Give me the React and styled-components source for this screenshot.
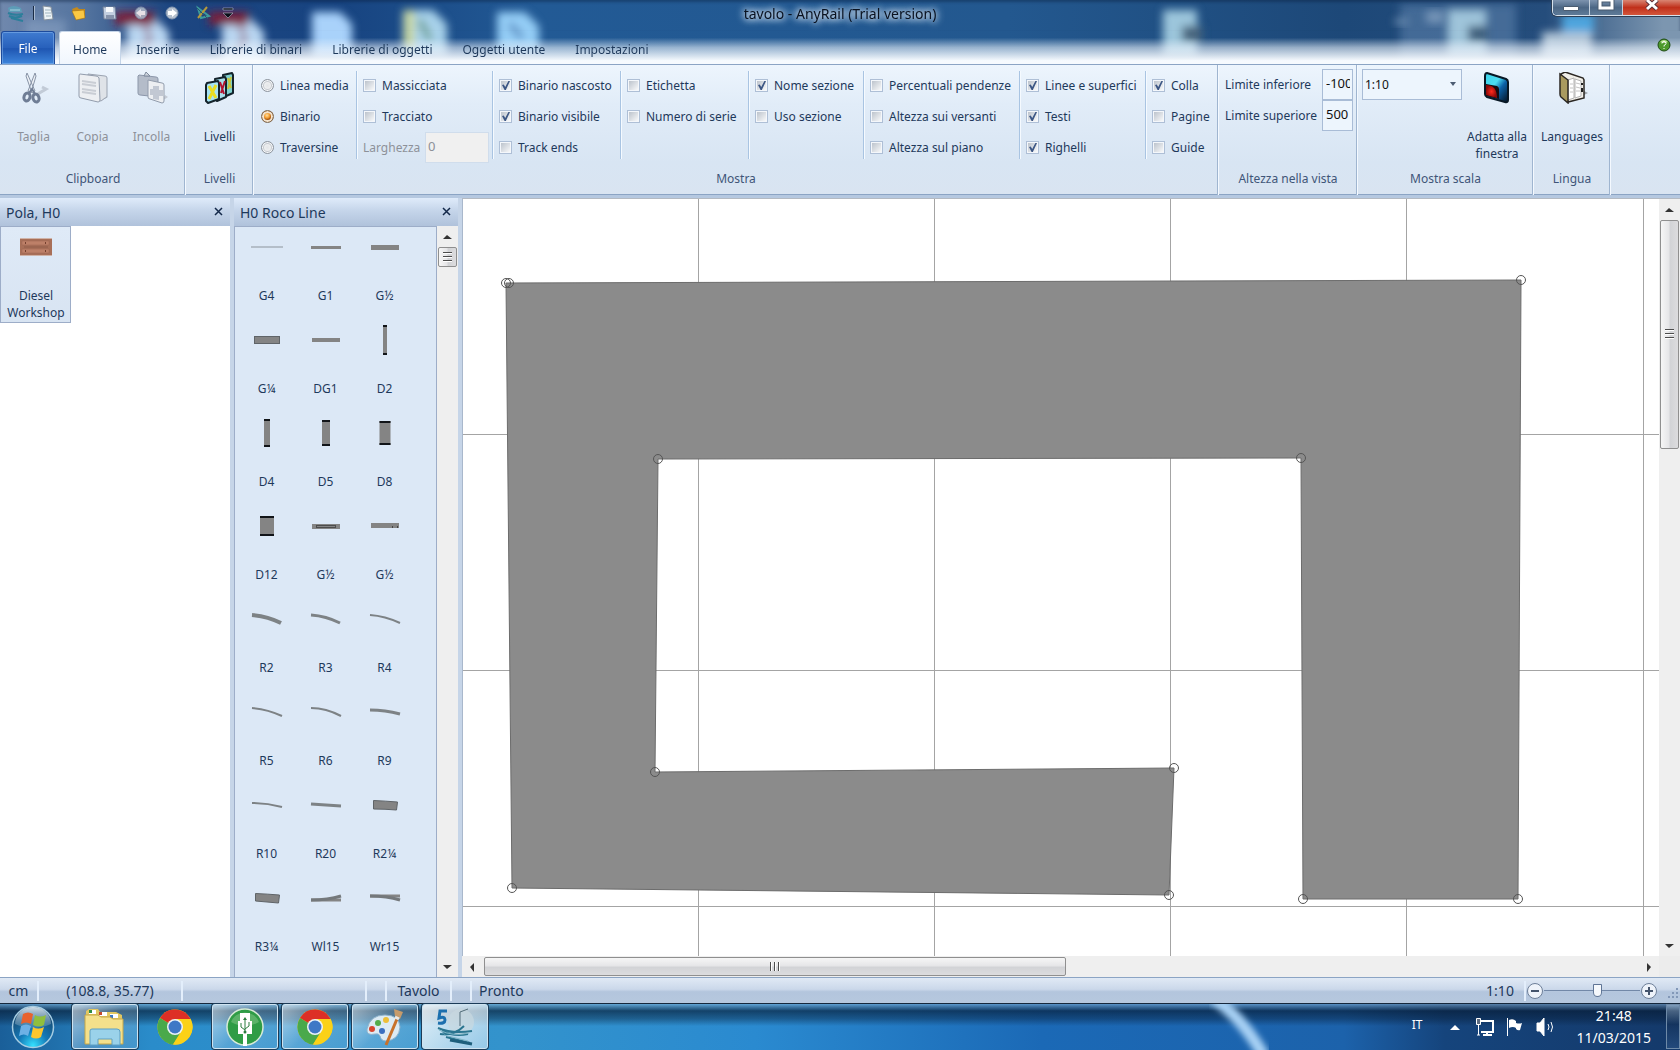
// src/App.jsx
import React from "react";
import styled, { createGlobalStyle, css } from "styled-components";

const GlobalStyle = createGlobalStyle`
  * {
    box-sizing: border-box;
  }

  body {
    margin: 0;
    overflow: hidden;
    font-family: "Noto Sans", "Open Sans", sans-serif;
    font-size: 12px;
    line-height: 17px;
    color: #1e395b;
  }

  button,
  input,
  select {
    margin: 0;
    padding: 0;
    font: inherit;
    color: inherit;
  }

  button {
    border: 0;
    background: none;
  }
`;

/* ---------- data ---------- */

const tabs = [
  "Home",
  "Inserire",
  "Librerie di binari",
  "Librerie di oggetti",
  "Oggetti utente",
  "Impostazioni",
];

const trackModes = ["Linea media", "Binario", "Traversine"];

const showColumns = [
  {
    width: 126,
    options: [
      ["Binario nascosto", true],
      ["Binario visibile", true],
      ["Track ends", false],
    ],
  },
  {
    width: 126,
    options: [
      ["Etichetta", false],
      ["Numero di serie", false],
    ],
  },
  {
    width: 113,
    options: [
      ["Nome sezione", true],
      ["Uso sezione", false],
    ],
  },
  {
    width: 154,
    options: [
      ["Percentuali pendenze", false],
      ["Altezza sui versanti", false],
      ["Altezza sul piano", false],
    ],
  },
  {
    width: 124,
    options: [
      ["Linee e superfici", true],
      ["Testi", true],
      ["Righelli", true],
    ],
  },
  {
    width: 70,
    options: [
      ["Colla", true],
      ["Pagine", false],
      ["Guide", false],
    ],
  },
];

const rail = "#848484";
const edge = "#5f6468";

// every drawing is centred in a 40x40 cell
const tracks = [
  { name: "G4", art: <path d="M4 20H36" stroke="#b4bec9" strokeWidth="2" /> },
  { name: "G1", art: <path d="M5 20.5H35" stroke={rail} strokeWidth="3" /> },
  { name: "G½", art: <path d="M6 20.5H34" stroke={rail} strokeWidth="5" /> },
  {
    name: "G¼",
    art: <rect x="7.5" y="16.5" width="25" height="7" fill={rail} stroke={edge} />,
  },
  { name: "DG1", art: <path d="M6 20H34" stroke={rail} strokeWidth="4" /> },
  { name: "D2", art: <Straight w={4} h={30} /> },
  { name: "D4", art: <Straight w={6} h={28} /> },
  { name: "D5", art: <Straight w={8} h={26} /> },
  { name: "D8", art: <Straight w={11} h={24} /> },
  { name: "D12", art: <Straight w={14} h={20} /> },
  {
    name: "G½",
    art: (
      <g>
        <rect x="6" y="18" width="28" height="5" fill={rail} />
        <rect x="10.5" y="19.5" width="19" height="2" fill="none" stroke="#4c4c4c" />
      </g>
    ),
  },
  {
    name: "G½",
    art: (
      <g>
        <rect x="6" y="17" width="28" height="5" fill={rail} />
        <path d="M27.5 20v2M32.5 20v2" stroke="#444" />
      </g>
    ),
  },
  { name: "R2", art: <Curve w={4} d="M5 16Q20 17 34 24" /> },
  { name: "R3", art: <Curve w={3} d="M5 16Q20 17 34 24" /> },
  { name: "R4", art: <Curve w={2} d="M5 16Q20 17 35 24" /> },
  { name: "R5", art: <Curve w={2} d="M5 16Q20 17 35 24" /> },
  { name: "R6", art: <Curve w={2} d="M5 16Q20 16 35 24" /> },
  { name: "R9", art: <Curve w={3} d="M5 18Q20 18 35 22" /> },
  { name: "R10", art: <Curve w={2} d="M5 18Q20 18 35 22" /> },
  { name: "R20", art: <Curve w={3} d="M5 19L35 21" /> },
  {
    name: "R2¼",
    art: <path d="M8.5 15.500Q20 16 32.500 17L31.500 25Q20 24 8.500 24Z" fill={rail} stroke={edge} />,
  },
  {
    name: "R3¼",
    art: <path d="M8.500 15.500Q20 16 32.500 17L31.500 25Q20 24 8.500 23Z" fill={rail} stroke={edge} />,
  },
  {
    name: "Wl15",
    art: (
      <g fill="none" stroke={rail} strokeWidth="3">
        <path d="M5 22H35" />
        <path d="M5 22Q22 22 35 18" stroke="#74787b" />
      </g>
    ),
  },
  {
    name: "Wr15",
    art: (
      <g fill="none" stroke={rail} strokeWidth="3">
        <path d="M5 18H35" />
        <path d="M5 18Q22 18 35 22" stroke="#74787b" />
      </g>
    ),
  },
];

const tableOutline = [
  [43, 84],
  [1058, 81],
  [1055, 700],
  [840, 700],
  [838, 259],
  [195, 260],
  [192, 573],
  [711, 569],
  [706, 696],
  [49, 689],
];

/* ---------- drawings ---------- */

function Straight({ w, h }) {
  const x = 20 - w / 2;
  const y = 20 - h / 2;
  return (
    <g>
      <rect x={x} y={y} width={w} height={h} fill={rail} />
      <path d={`M${x} ${y + 1}h${w}M${x} ${y + h - 1}h${w}`} stroke="#111418" strokeWidth="2" />
    </g>
  );
}

function Curve({ w, d }) {
  return <path d={d} fill="none" stroke="#7d8285" strokeWidth={w} />;
}

const DesktopGlow = () => (
  <Backdrop aria-hidden="true">
    <defs>
      <filter id="soft" x="-30%" y="-30%" width="160%" height="160%">
        <feGaussianBlur stdDeviation="4" />
      </filter>
    </defs>
    <g filter="url(#soft)">
      <path d="M26 20h40v40H26z" fill="#a5bdd9" opacity=".35" />
      <path d="M127 18h28l14 14v36h-42z" fill="#b9d6f1" />
      <path d="M115 12h40v13h-40z" fill="#7c1c38" />
      <path d="M144 24l6 14-8 16" fill="none" stroke="#8c2e49" strokeWidth="3" />
      <path d="M222 18h28l14 14v36h-42z" fill="#b9d6f1" />
      <path d="M209 12h40v13h-40z" fill="#7c1c38" />
      <path d="M239 24l6 14-8 16" fill="none" stroke="#8c2e49" strokeWidth="3" />
      <path d="M312 12h28l12 12v34h-40z" fill="#a9d2fa" />
      <path d="M403 10h30l14 14v32h-44z" fill="#a8d2ea" />
      <path d="M404 10h10v40h-10z" fill="#c9d79a" />
      <path d="M420 20l10 20" stroke="#5a8f6f" strokeWidth="5" />
      <path d="M497 12h28l14 14v26h-42z" fill="#94cdf6" />
      <path d="M510 24l12 14" stroke="#4d80b8" strokeWidth="5" />
      <path d="M1163 10h34v46h-34z" fill="#9cc6dc" />
      <path d="M1182 26h20v16h-20z" fill="#46637b" />
      <path d="M1400 4h116v60h-116z" fill="#5a80aa" opacity=".6" />
      <path d="M1448 10h38v46h-38z" fill="#9fc4da" />
      <path d="M1468 26h20v16h-20z" fill="#3e5e7d" />
      <path d="M1562 14h32v20h-32z" fill="#4ea5de" />
      <path d="M1542 32h50v26h-50z" fill="#b2c6d8" />
    </g>
    <g filter="url(#soft)" fill="#8ca8c6" opacity=".7">
      <path d="M1394 19h14v5h-14zM1426 11h18v12h-18z" />
    </g>
  </Backdrop>
);

const AppLogo = () => (
  <svg width="18" height="18" viewBox="0 0 18 18" fill="none" aria-hidden="true">
    <path d="M1 4q5-4 13 0l1 4H2z" fill="#5d9cb7" />
    <path d="M1 9q7 3 15 1M2 12q6 3 13 0M4 14l12 3" stroke="#2c7f9b" strokeWidth="2" />
    <path d="M3 6h10" stroke="#a6d4e1" />
  </svg>
);

const quickIcons = [
  {
    label: "Nuovo",
    art: (
      <g>
        <path d="M3 1l8 1 2 12-9 1z" fill="#eef4f7" stroke="#86919c" />
        <path d="M5 5h6M5 8h6M6 11h5" stroke="#9fb4bf" />
      </g>
    ),
  },
  {
    label: "Apri",
    art: (
      <g>
        <path d="M1 4l5-2 2 2h6v9l-9 1z" fill="#c48a1d" />
        <path d="M1 6l12-1 1 8-9 2z" fill="#fbc844" stroke="#a06d12" strokeWidth=".6" />
      </g>
    ),
  },
  {
    label: "Salva",
    art: (
      <g>
        <path d="M1 2h12l1 12H2z" fill="#c3cfe0" stroke="#71809a" />
        <path d="M4 2h7v5H4z" fill="#f6f9fc" />
        <path d="M4 10h8v4H4z" fill="#8693ab" />
      </g>
    ),
  },
  {
    label: "Annulla",
    art: (
      <g opacity=".85">
        <circle cx="8" cy="8" r="6" fill="#aebccd" stroke="#8697ae" />
        <path d="M3 8l5-4v2h4v4H8v2z" fill="#fff" />
      </g>
    ),
  },
  {
    label: "Ripeti",
    art: (
      <g>
        <circle cx="8" cy="8" r="6" fill="#b5c0ce" stroke="#8697ae" />
        <path d="M13 8L8 4v2H4v4h4v2z" fill="#fff" />
      </g>
    ),
  },
  {
    label: "Disegna",
    art: (
      <g fill="none">
        <path d="M3 3l3 10 8-2z" stroke="#3d9a9c" strokeWidth="2" />
        <path d="M12 2L3 13" stroke="#b59a3c" strokeWidth="2" />
        <path d="M2 3l11 11" stroke="#28596e" />
      </g>
    ),
  },
];

const Scissors = () => (
  <svg width="32" height="32" viewBox="0 0 32 32" fill="none" aria-hidden="true">
    <path d="M18 23l10-6-4-2" stroke="#c2cbd7" strokeWidth="3" />
    <path d="M9 1l-1 3 6 17 3-2zM17 1l1 3-5 17-3-2z" fill="#eef2f7" stroke="#8793a6" />
    <ellipse cx="9" cy="25" rx="3" ry="4" stroke="#6f7d95" strokeWidth="3" transform="rotate(20 9 25)" />
    <ellipse cx="18" cy="26" rx="3" ry="4" stroke="#6f7d95" strokeWidth="3" transform="rotate(-20 18 26)" />
    <path d="M11 21l3-4 3 5" stroke="#6f7d95" strokeWidth="2" />
  </svg>
);

const CopyPages = () => (
  <svg width="32" height="32" viewBox="0 0 32 32" fill="none" aria-hidden="true">
    <path d="M24 29l7-4-3-2z" fill="#b9c1cc" />
    <path d="M11 2l17 2q2 0 2 2v18q0 2-2 2l-4 3-13-3z" fill="#dfe3e8" stroke="#9aa3b1" />
    <path d="M3 2l16 2q2 0 3 2l1 22q0 2-2 2L4 26q-2 0-2-2V4q0-2 1-2z" fill="#edeff2" stroke="#929cac" />
    <path d="M5 9l14 2M5 12l14 2M5 17l14 2M5 20l14 2" stroke="#c9cdd4" strokeWidth="2" />
  </svg>
);

const PastePages = () => (
  <svg width="32" height="32" viewBox="0 0 32 32" fill="none" aria-hidden="true">
    <path d="M26 29l6-4-3-2z" fill="#c3c9d3" />
    <path d="M3 3l17 2q2 0 2 2v18L4 23q-2 0-2-2V4z" fill="#b4bcc9" stroke="#8c97aa" />
    <path d="M8 4l2-4 4 4z" fill="#cfd5de" stroke="#7e8a9d" />
    <path d="M12 8l14 3q2 0 2 2v16q0 2-2 2l-12-4q-2 0-2-2z" fill="#edeff2" stroke="#929cac" />
    <path d="M17 14h6v4h4v6h-4v4l-6-1v-4h-3v-6h3z" fill="#c2c8d3" />
  </svg>
);

const Layers = () => (
  <svg width="32" height="32" viewBox="0 0 32 32" aria-hidden="true">
    <g stroke="#14232b" strokeWidth="2" strokeLinejoin="round">
      <path d="M19 3l9-2 1 2v18l-9 4z" fill="#7fd0cf" />
      <path d="M11 7l10-2 1 2v18l-9 4z" fill="#a9dfeb" />
      <path d="M3 11l11-2 1 2v16L4 31l-2-2V13z" fill="#a6e3f5" />
    </g>
    <path d="M16 10l4 12M21 9l-4 12" stroke="#b3122f" strokeWidth="2" fill="none" />
    <path d="M24 6l3 10M27 5l-3 12" stroke="#c7c439" strokeWidth="2" />
    <path d="M5 14l7 12M12 13L5 27" stroke="#e9dd22" strokeWidth="3" />
  </svg>
);

const FitScreen = () => (
  <svg width="32" height="32" viewBox="0 0 32 32" aria-hidden="true">
    <defs>
      <linearGradient id="fitBlue" x1="0" y1="0" x2="1" y2="1">
        <stop offset="0" stopColor="#3ad4ea" />
        <stop offset=".4" stopColor="#4cdcf2" />
        <stop offset=".6" stopColor="#0c62a8" />
        <stop offset="1" stopColor="#05101e" />
      </linearGradient>
      <radialGradient id="fitRed">
        <stop offset="0" stopColor="#ff2a1c" />
        <stop offset="1" stopColor="#8c0808" />
      </radialGradient>
    </defs>
    <path d="M6 1l19 6q2 1 2 3v18q0 3-3 2L6 25q-2-1-2-3V4q0-3 2-3z" fill="url(#fitBlue)" stroke="#081825" strokeWidth="2" />
    <path d="M5 12l11 2q2 1 2 3v10L5 24z" fill="#150c12" />
    <path d="M5 13q11 0 11 13L5 23z" fill="url(#fitRed)" />
  </svg>
);

const Book = () => (
  <svg width="32" height="32" viewBox="0 0 32 32" aria-hidden="true">
    <path d="M24 25l8-4-4-2z" fill="#9aa0a6" />
    <path d="M5 2l4-2 18 6 1 2v18l-16 4z" fill="#f1efe9" stroke="#2b2723" strokeWidth="1.500" />
    <path d="M12 8l6-2v20l-6 2zM19 7l6 2v15l-6 2z" fill="#fff" stroke="#b5b5b5" />
    <path d="M20 11l4 1M20 15l4 1M20 19l4 0M14 12h3M14 16h3M14 20h3" stroke="#c4c4c4" />
    <path d="M4 2l8 6v23l-7-6q-1-1-1-3z" fill="#a99a5f" stroke="#2b2723" strokeWidth="1.500" />
    <path d="M26 11v2M26 16v4" stroke="#222" strokeWidth="2" />
  </svg>
);

const DieselShed = () => (
  <svg width="32" height="18" viewBox="0 0 32 18" aria-hidden="true">
    <path d="M0 0h32v18H0z" fill="#a86f58" />
    <path d="M0 .5h32M0 17.500h32" stroke="#cfb3a8" />
    <path d="M2 3h27v4H2zM2 11h27v4H2z" fill="#bd8068" stroke="#9d6450" strokeWidth=".5" />
    <path d="M4 9h24" stroke="#9b6550" strokeWidth="2" />
    <path d="M5 5h1M25 5h1M5 13h1M25 13h1" stroke="#74402f" strokeWidth="2" />
  </svg>
);

const WindowsOrb = () => (
  <svg width="44" height="44" viewBox="0 0 44 44" aria-hidden="true">
    <defs>
      <radialGradient id="orb" cx=".5" cy=".95" r=".8">
        <stop offset="0" stopColor="#35e0ff" />
        <stop offset=".45" stopColor="#1479b7" />
        <stop offset="1" stopColor="#174a72" />
      </radialGradient>
      <linearGradient id="orbShine" x1="0" y1="0" x2="0" y2="1">
        <stop offset="0" stopColor="#e3edf4" stopOpacity=".9" />
        <stop offset="1" stopColor="#9db9cc" stopOpacity=".25" />
      </linearGradient>
    </defs>
    <circle cx="22" cy="22" r="20.500" fill="url(#orb)" stroke="#a6cde2" strokeWidth="1.500" />
    <path d="M4 19a18 17 0 0 1 36 0q-18 8-36 0z" fill="url(#orbShine)" />
    <path d="M12 9q5-3 10 0l-2 10q-5-3-10 0z" fill="#e8622c" />
    <path d="M24 10q5 3 11 0l-2 10q-5 3-11 0z" fill="#90bf3d" />
    <path d="M10 21q5-3 10 0l-3 10q-4-3-9 0z" fill="#6db1e5" />
    <path d="M22 22q5 3 11 0l-3 10q-5 3-10 0z" fill="#fbc62e" />
  </svg>
);

const Folder = () => (
  <svg width="42" height="40" viewBox="0 0 42 40" aria-hidden="true">
    <path d="M2 4l3-2h9l2 3h16l6 3v28H2z" fill="#e2c761" />
    <path d="M5 3h7v4H5zM15 5h8v4h-8zM26 7h8v4h-8z" fill="#fff" />
    <path d="M5 3h3v3H5z" fill="#2f8d45" />
    <path d="M15 5h3v3h-3z" fill="#c4482f" />
    <path d="M26 8h3v3h-3z" fill="#3a78c4" />
    <path d="M1 8h13l3 2h9l3 2h10v25H1z" fill="#f4e08b" stroke="#c6a748" />
    <path d="M6 24q0-2 2-2h25q3 0 3 3v13h-8v-6H14v6H6z" fill="#9ad2ea" stroke="#5fa0c4" />
  </svg>
);

const Chrome = () => (
  <svg width="36" height="36" viewBox="0 0 36 36" aria-hidden="true">
    <circle cx="18" cy="18" r="17.500" fill="#fbd117" />
    <path d="M18 18L3 9A17.500 17.500 0 0 1 33.500 10H18z" fill="#dd2f26" />
    <path d="M18 18L3 9a17.500 17.500 0 0 0 13 26.500l8-13z" fill="#4aa94b" />
    <path d="M18 10h15.500A17.500 17.500 0 0 1 16 35.500L25 22z" fill="#fbd117" />
    <circle cx="18" cy="18" r="8" fill="#eef3f8" />
    <circle cx="18" cy="18" r="6.500" fill="#3f78c6" />
  </svg>
);

const UsbTree = () => (
  <svg width="38" height="38" viewBox="0 0 38 38" aria-hidden="true">
    <circle cx="19" cy="19" r="18" fill="#2f9c46" stroke="#d7ead7" strokeWidth="1.500" />
    <path d="M5 14a15 15 0 0 1 28 0q-14 8-28 0z" fill="#79c27f" opacity=".6" />
    <path d="M14 5h10v8h2v13h-5v12h-4V26h-5V13h2z" fill="#fff" />
    <path d="M19 11v14M15 15v4l4 3M23 14v4l-4 3" fill="none" stroke="#2b7c3e" />
    <circle cx="19" cy="24" r="1.500" fill="#2b7c3e" />
    <path d="M17 12l2-3 2 3z" fill="#2b7c3e" />
  </svg>
);

const Palette = () => (
  <svg width="40" height="40" viewBox="0 0 40 40" aria-hidden="true">
    <path d="M2 22Q5 8 20 8q14 0 15 12-1 13-14 14-5 0-6-5-1-3-5-2-9 2-8-5z" fill="#dcebf4" stroke="#8fb2cb" />
    <circle cx="7" cy="22" r="3" fill="#d8452f" />
    <circle cx="13" cy="16" r="3" fill="#53ac4b" />
    <circle cx="21" cy="13" r="3" fill="#eebf38" />
    <circle cx="17" cy="24" r="3" fill="#3a6fc0" />
    <path d="M32 12L21 38" stroke="#c8722b" strokeWidth="3" />
    <path d="M29 2l9 3-3 7-5-2z" fill="#c69b6b" />
    <path d="M30 10l4 2" stroke="#e8e8e8" strokeWidth="3" />
  </svg>
);

const AnyRail = () => (
  <svg width="42" height="42" viewBox="0 0 42 42" fill="none" aria-hidden="true">
    <circle cx="27" cy="16" r="13" fill="#c9d8df" opacity=".7" />
    <path d="M13 5H6L5 12q6-2 6 2t-7 3" stroke="#1c6fae" strokeWidth="3" />
    <path d="M26 20V6l8-3" stroke="#536d7a" />
    <path d="M4 22q14 6 34 3M6 28q14 2 24-8M12 31l24 6M8 25q12 6 26 3" stroke="#2a7590" strokeWidth="2" />
    <path d="M16 34l22 4" stroke="#1e5f7c" strokeWidth="3" />
    <path d="M5 24q14 7 30 3M10 29l24 6" stroke="#7fb5c6" />
  </svg>
);

const taskItems = [
  { label: "Esplora risorse", icon: <Folder />, open: true },
  { label: "Chrome", icon: <Chrome /> },
  { label: "USB", icon: <UsbTree />, open: true },
  { label: "Chrome aperto", icon: <Chrome />, open: true },
  { label: "Paint", icon: <Palette />, open: true },
  { label: "AnyRail", icon: <AnyRail />, open: true, active: true },
];

/* ---------- pieces ---------- */

const CheckOption = ({ label, checked }) => (
  <Option>
    <CheckBox type="checkbox" defaultChecked={checked} />
    {label}
  </Option>
);

const Arrow = ({ dir }) => {
  const shapes = {
    up: "M1 8L5 4l5 4z",
    down: "M1 4l4 4 5-4z",
    left: "M7 2L3 6l4 5z",
    right: "M4 2l4 4-4 5z",
  };
  return (
    <ArrowButton type="button" aria-label={dir}>
      <svg width="12" height="12" viewBox="0 0 12 12">
        <path d={shapes[dir]} fill="#333" />
      </svg>
    </ArrowButton>
  );
};

const TrackPlan = () => (
  <Plan aria-label="tavolo">
    <g stroke="#a4a4a4" shapeRendering="crispEdges">
      {[235, 471, 707, 943, 1180].map((x) => (
        <line key={x} x1={x} y1="0" x2={x} y2="100%" />
      ))}
      {[235, 471, 707].map((y) => (
        <line key={y} x1="0" y1={y} x2="100%" y2={y} />
      ))}
    </g>
    <polygon points={tableOutline.join(" ")} fill="#8b8b8b" stroke="#6c6c6c" />
    <g fill="none" stroke="#555">
      {[...tableOutline, [46, 84]].map(([x, y]) => (
        <circle key={`${x}-${y}`} cx={x} cy={y} r="4.500" />
      ))}
    </g>
  </Plan>
);

const App = () => {
  return (
    <Screen>
      <GlobalStyle />
      <Header>
        <DesktopGlow />
        <TitleBar>
          <QuickAccess>
            <AppLogo />
            <QuickSeparator />
            <QuickList>
              {quickIcons.map(({ label, art }) => (
                <button key={label} type="button" aria-label={label}>
                  <QuickSvg viewBox="0 0 16 16">{art}</QuickSvg>
                </button>
              ))}
            </QuickList>
            <MoreButton type="button" aria-label="Personalizza">
              <svg width="12" height="12" viewBox="0 0 12 12">
                <path d="M1 1h10v2H1zM1 6h10L6 11z" fill="#0a0f18" stroke="#c9d5e4" strokeWidth=".5" />
              </svg>
            </MoreButton>
          </QuickAccess>
          <Caption>tavolo - AnyRail (Trial version)</Caption>
          <WindowButtons>
            <WindowButton type="button" aria-label="Riduci" $width={36}>
              <svg width="18" height="18">
                <path d="M1.500 6.500h15v4h-15z" fill="#fff" stroke="#4b5c70" />
              </svg>
            </WindowButton>
            <WindowButton type="button" aria-label="Ingrandisci" $width={33}>
              <svg width="18" height="18">
                <path d="M3 0h12v8H3z" fill="none" stroke="#4b5c70" strokeWidth="5" />
                <path d="M3 0h12v8H3z" fill="none" stroke="#fff" strokeWidth="3" />
              </svg>
            </WindowButton>
            <WindowButton type="button" aria-label="Chiudi" $width={58} $close>
              <svg width="18" height="18">
                <path d="M4 0l10 9M14 0L4 9" stroke="#5b3038" strokeWidth="5" />
                <path d="M4 0l10 9M14 0L4 9" stroke="#fff" strokeWidth="3" />
              </svg>
            </WindowButton>
          </WindowButtons>
        </TitleBar>
        <TabRow>
          <FileTab type="button">File</FileTab>
          {tabs.map((tab, i) => (
            <Tab key={tab} type="button" $active={i === 0}>
              {tab}
            </Tab>
          ))}
          <HelpButton type="button" aria-label="Guida">
            <svg width="14" height="14" viewBox="0 0 14 14">
              <circle cx="7" cy="7" r="6" fill="#4d9a2b" stroke="#1e4a14" />
              <path d="M3 4q4-4 8 0-4 2-8 0z" fill="#b6e08f" />
              <path d="M5 5.500q0-2 2-2t2 2q0 1-2 2v1M7 10v1" stroke="#fff" fill="none" />
            </svg>
          </HelpButton>
        </TabRow>
      </Header>

      <Ribbon>
        <Group $width={185}>
          <GroupBody $pad={4}>
            <BigButton type="button" disabled>
              <Scissors />
              <span>Taglia</span>
            </BigButton>
            <BigButton type="button" disabled>
              <CopyPages />
              <span>Copia</span>
            </BigButton>
            <BigButton type="button" disabled>
              <PastePages />
              <span>Incolla</span>
            </BigButton>
          </GroupBody>
          <GroupLabel>Clipboard</GroupLabel>
        </Group>

        <Group $width={68}>
          <GroupBody $pad={5}>
            <BigButton type="button">
              <Layers />
              <span>Livelli</span>
            </BigButton>
          </GroupBody>
          <GroupLabel>Livelli</GroupLabel>
        </Group>

        <Group $width={965}>
          <GroupBody>
            <Column $width={103} $indent={8}>
              {trackModes.map((mode) => (
                <Option key={mode}>
                  <Radio type="radio" name="mode" defaultChecked={mode === "Binario"} />
                  {mode}
                </Option>
              ))}
            </Column>
            <Divider />
            <Column $width={134} $indent={5}>
              <CheckOption label="Massicciata" />
              <CheckOption label="Tracciato" />
              <WidthField>
                Larghezza
                <WidthInput defaultValue="0" disabled />
              </WidthField>
            </Column>
            {showColumns.map(({ width, options }) => (
              <React.Fragment key={width + options[0][0]}>
                <Divider />
                <Column $width={width} $indent={5}>
                  {options.map(([label, checked]) => (
                    <CheckOption key={label} label={label} checked={checked} />
                  ))}
                </Column>
              </React.Fragment>
            ))}
          </GroupBody>
          <GroupLabel>Mostra</GroupLabel>
        </Group>

        <Group $width={139}>
          <LimitFields>
            <LimitField>
              Limite inferiore
              <LimitInput defaultValue="-100" />
            </LimitField>
            <LimitField>
              Limite superiore
              <LimitInput defaultValue="500" />
            </LimitField>
          </LimitFields>
          <GroupLabel>Altezza nella vista</GroupLabel>
        </Group>

        <Group $width={176}>
          <GroupBody $pad={5}>
            <ScaleBox>
              <ScaleSelect aria-label="Scala" defaultValue="1:10">
                <option>1:10</option>
              </ScaleSelect>
              <ScaleArrow viewBox="0 0 6 4">
                <path d="M0 0h6L3 4z" fill="#4c5c72" />
              </ScaleArrow>
            </ScaleBox>
            <BigButton type="button" $width={70}>
              <FitScreen />
              <span>Adatta alla finestra</span>
            </BigButton>
          </GroupBody>
          <GroupLabel>Mostra scala</GroupLabel>
        </Group>

        <Group $width={77}>
          <GroupBody $pad={4}>
            <BigButton type="button" $width={70}>
              <Book />
              <span>Languages</span>
            </BigButton>
          </GroupBody>
          <GroupLabel>Lingua</GroupLabel>
        </Group>
      </Ribbon>

      <Workspace>
        <Panel $width={230}>
          <PanelHeader>
            Pola, H0
            <CloseButton type="button" aria-label="Chiudi Pola">
              <CloseCross />
            </CloseButton>
          </PanelHeader>
          <PanelBody $white>
            <ObjectCard type="button">
              <DieselShed />
              <span>Diesel Workshop</span>
            </ObjectCard>
          </PanelBody>
        </Panel>

        <Panel $width={224}>
          <PanelHeader>
            H0 Roco Line
            <CloseButton type="button" aria-label="Chiudi Roco">
              <CloseCross />
            </CloseButton>
          </PanelHeader>
          <PanelBody>
            <TrackGrid>
              {tracks.map(({ name, art }, i) => (
                <TrackCell key={name + i}>
                  <svg width="40" height="40" viewBox="0 0 40 40" aria-hidden="true">
                    {art}
                  </svg>
                  {name}
                </TrackCell>
              ))}
            </TrackGrid>
            <ScrollBar $vertical>
              <Arrow dir="up" />
              <Track $vertical>
                <Thumb $vertical $size="20px">
                  <Grip $vertical />
                </Thumb>
              </Track>
              <Arrow dir="down" />
            </ScrollBar>
          </PanelBody>
        </Panel>

        <CanvasArea>
          <TrackPlan />
          <ScrollBar $vertical>
            <Arrow dir="up" />
            <Track $vertical>
              <Thumb $vertical $size="32%">
                <Grip $vertical />
              </Thumb>
            </Track>
            <Arrow dir="down" />
          </ScrollBar>
          <ScrollBar>
            <Arrow dir="left" />
            <Track>
              <Thumb $size="50.500%">
                <Grip />
              </Thumb>
            </Track>
            <Arrow dir="right" />
          </ScrollBar>
          <Corner />
        </CanvasArea>
      </Workspace>

      <StatusBar>
        <StatusCell $width={39}>cm</StatusCell>
        <StatusCell $width={144}>(108.8, 35.77)</StatusCell>
        <StatusCell $width={184} />
        <StatusCell $width={20} />
        <StatusCell $width={65}>Tavolo</StatusCell>
        <StatusCell $width={20} />
        <StatusMessage>Pronto</StatusMessage>
        <StatusCell $width={50}>1:10</StatusCell>
        <ZoomButton type="button" aria-label="Riduci zoom">
          <svg width="18" height="18" viewBox="0 0 18 18">
            <circle cx="9" cy="9" r="7.500" fill="#eef3fa" stroke="#6d7f99" />
            <path d="M5 9h8" stroke="#44546c" strokeWidth="2" />
          </svg>
        </ZoomButton>
        <ZoomSlider type="range" aria-label="Zoom" min="0" max="100" defaultValue="56" />
        <ZoomButton type="button" aria-label="Aumenta zoom">
          <svg width="18" height="18" viewBox="0 0 18 18">
            <circle cx="9" cy="9" r="7.500" fill="#eef3fa" stroke="#6d7f99" />
            <path d="M5 9h8M9 5v8" stroke="#44546c" strokeWidth="2" />
          </svg>
        </ZoomButton>
        <SizeGrip viewBox="0 0 12 12">
          <path d="M8 0h2v2H8zM4 4h2v2H4zM8 4h2v2H8zM0 8h2v2H0zM4 8h2v2H4zM8 8h2v2H8z" fill="#8298b8" />
        </SizeGrip>
      </StatusBar>

      <Taskbar>
        <StartButton type="button" aria-label="Start">
          <WindowsOrb />
        </StartButton>
        <TaskList>
          {taskItems.map(({ label, icon, open, active }) => (
            <TaskButton key={label} type="button" aria-label={label} $open={open} $active={active}>
              {icon}
            </TaskButton>
          ))}
        </TaskList>
        <LightStreak viewBox="0 0 120 46" aria-hidden="true">
          <defs>
            <filter id="streak">
              <feGaussianBlur stdDeviation="3" />
            </filter>
          </defs>
          <path d="M6 -6Q34 14 56 52" fill="none" stroke="#a9d2f5" strokeWidth="12" filter="url(#streak)" />
        </LightStreak>
        <Tray>
          <Language>IT</Language>
          <svg width="20" height="20" viewBox="0 0 20 20">
            <path d="M5 13l5-5 5 5z" fill="#fff" />
          </svg>
          <svg width="20" height="20" viewBox="0 0 20 20" fill="none" stroke="#fff">
            <path d="M6 4h12v11H6" strokeWidth="2" />
            <path d="M1.500 1.500h4v6h-4zM3.500 8v10M2 18h3" fill="#5b6b80" />
            <path d="M12 15v3M8 18h9" strokeWidth="2" />
          </svg>
          <svg width="20" height="20" viewBox="0 0 20 20" fill="#fff">
            <path d="M2 1h1v18H2zM4 3q4-2 7 1v7q-3-2-7 0zM11 6q3 1 6 0l-2 7q-2 1-4-1z" />
          </svg>
          <svg width="20" height="20" viewBox="0 0 20 20" fill="none" stroke="#fff">
            <path d="M2 6h3l4-5v18l-4-5H2z" fill="#fff" />
            <path d="M13 7q2 3 0 6M16 5q3 5 0 10" />
          </svg>
          <Clock>
            <span>21:48</span>
            <span>11/03/2015</span>
          </Clock>
          <ShowDesktop type="button" aria-label="Mostra desktop" />
        </Tray>
      </Taskbar>
    </Screen>
  );
};

const CloseCross = () => (
  <svg width="10" height="10" viewBox="0 0 10 10">
    <path d="M1 1l7 7M8 1L1 8" stroke="#14294a" strokeWidth="1.500" />
  </svg>
);

/* ---------- styles ---------- */

const line = "#8ba4c4";

const Screen = styled.div`
  display: flex;
  flex-direction: column;
  height: 100vh;
  background: #c6d5e8;
`;

const Header = styled.header`
  position: relative;
  flex: none;
  overflow: hidden;
  background: linear-gradient(
    90deg,
    #7088ad 0,
    #54749f 5%,
    #1d4681 10%,
    #174380 20%,
    #225a95 32%,
    #23588f 60%,
    #1d4878 80%,
    #254d7c 92%,
    #7c96b0 99%
  );
`;

const Backdrop = styled.svg`
  position: absolute;
  inset: 0;
  width: 100%;
  height: 100%;
`;

const TitleBar = styled.div`
  position: relative;
  display: grid;
  grid-template-columns: 1fr auto 1fr;
  height: 31px;
  box-shadow: inset 0 2px 3px rgba(10, 30, 60, 0.4);
`;

const QuickAccess = styled.div`
  display: flex;
  align-items: center;
  height: 25px;
  padding-left: 7px;
`;

const QuickSeparator = styled.span`
  width: 2px;
  height: 14px;
  margin: 0 5px 0 8px;
  border-left: 1px solid #1b2c45;
  border-right: 1px solid #a9bad0;
`;

const QuickList = styled.div`
  display: flex;
  gap: 15px;

  button {
    display: flex;
  }
`;

const QuickSvg = styled.svg`
  width: 16px;
  height: 16px;
`;

const MoreButton = styled.button`
  display: flex;
  margin-left: 11px;
`;

const Caption = styled.h1`
  margin: 0;
  padding-top: 3px;
  font-size: 14px;
  font-weight: 400;
  line-height: 22px;
  color: #0a1220;
  text-shadow: 0 0 6px #fff, 0 0 8px #cfe0f2, 0 0 10px #cfe0f2;
`;

const WindowButtons = styled.div`
  display: flex;
  justify-self: end;
  align-self: start;
  height: 16px;
  border: 1px solid #d7e2ec;
  border-width: 0 0 1px 1px;
  border-radius: 0 0 0 5px;
  box-shadow: 0 0 0 1px #2c3e55;
`;

const WindowButton = styled.button`
  width: ${({ $width }) => $width}px;
  overflow: hidden;
  border-left: 1px solid #c3d0dd;
  background: ${({ $close }) =>
    $close
      ? "linear-gradient(#d98572, #c0301b 50%, #d3563b)"
      : "linear-gradient(#7d93ae, #4c6785 50%, #5f7b98)"};

  &:first-child {
    border-left: 0;
    border-radius: 0 0 0 5px;
  }
`;

const TabRow = styled.nav`
  position: relative;
  display: flex;
  height: 33px;
  padding-left: 1px;
  background: linear-gradient(
    rgba(255, 255, 255, 0) 20%,
    rgba(232, 241, 250, 0.6) 50%,
    #f6fafe 90%
  );
`;

const FileTab = styled.button`
  width: 54px;
  margin-right: 4px;
  border: 1px solid #1d4b9c;
  border-bottom: 0;
  border-radius: 3px 3px 0 0;
  background: linear-gradient(#3f7bd0, #2760bb 50%, #1f56b2 52%, #3e86dc);
  box-shadow: inset 0 0 0 1px rgba(140, 185, 240, 0.5);
  color: #fff;
`;

const Tab = styled.button`
  padding: 4px 15px 0;

  ${({ $active }) =>
    $active &&
    css`
      padding: 3px 13px 0;
      border: 1px solid #c5d5e8;
      border-bottom: 0;
      border-radius: 3px 3px 0 0;
      background: linear-gradient(#fff, #f0f6fd);
    `}
`;

const HelpButton = styled.button`
  margin-left: auto;
  padding: 6px 9px 0 0;
  align-self: start;
  height: 26px;
`;

const Ribbon = styled.section`
  display: flex;
  flex: none;
  height: 134px;
  border-top: 1px solid ${line};
  border-bottom: 3px solid #b5c8e0;
  background: linear-gradient(#edf5fd, #e1ecf8 30%, #d8e5f3 75%, #d9e4f1);
  box-shadow: inset 0 -1px 0 ${line};
`;

const Group = styled.div`
  display: flex;
  flex-direction: column;
  flex: none;
  width: ${({ $width }) => $width}px;
  padding-bottom: 8px;
  border-right: 1px solid #9fb5d0;
  box-shadow: 1px 0 0 #f4f9ff;
`;

const GroupBody = styled.div`
  display: flex;
  flex: 1;
  padding-left: ${({ $pad }) => $pad || 0}px;
`;

const GroupLabel = styled.div`
  padding-left: 2px;
  text-align: center;
  color: #3f5578;
`;

const BigButton = styled.button`
  display: flex;
  flex-direction: column;
  align-items: center;
  gap: 24px;
  width: ${({ $width }) => $width || 59}px;
  padding-top: 7px;

  &:disabled {
    color: #8d9199;
  }
`;

const Column = styled.div`
  display: flex;
  flex-direction: column;
  width: ${({ $width }) => $width}px;
  padding: 5px 0 0 ${({ $indent }) => $indent}px;
`;

const Divider = styled.span`
  width: 2px;
  height: 88px;
  margin-top: 6px;
  border-left: 1px solid #a9c4e2;
  border-right: 1px solid #f5faff;
`;

const Option = styled.label`
  display: flex;
  align-items: center;
  gap: 6px;
  height: 31px;
  white-space: nowrap;
`;

const CheckBox = styled.input`
  appearance: none;
  display: grid;
  width: 13px;
  height: 13px;
  border: 1px solid #aebfd6;
  background: linear-gradient(135deg, #bcc3cc, #f8f9fa) center / 9px 9px no-repeat #f4f7fb;

  &:checked::after {
    content: "";
    width: 8px;
    height: 9px;
    margin: 1px 0 0 2px;
    background: #3c5684;
    clip-path: polygon(0 45%, 22% 40%, 40% 68%, 80% 0, 100% 0, 48% 100%, 32% 100%);
  }
`;

const Radio = styled.input`
  appearance: none;
  width: 13px;
  height: 13px;
  border: 1px solid #8d949d;
  border-radius: 50%;
  background: radial-gradient(#e4e6e8, #fafbfc);
  box-shadow: inset 0 0 0 1px #f6f8fa, inset 0 0 0 2px #c5c9ce;

  &:checked {
    border-color: #7f6a52;
    background: radial-gradient(circle at 45% 40%, #ffe0a0, #f29a2e 30%, #9a4a08 50%);
    box-shadow: inset 0 0 0 2px #f3e3cd;
  }
`;

const WidthField = styled.label`
  display: flex;
  align-items: center;
  justify-content: space-between;
  height: 31px;
  padding-right: 3px;
  color: #8d9199;
`;

const WidthInput = styled.input`
  width: 64px;
  height: 31px;
  padding: 0 0 4px 2px;
  border: 1px solid #d0ddec;
  background: #f0f0f0;
  font-size: 13px;
`;

const LimitFields = styled.div`
  flex: 1;
  padding: 4px 3px 0 7px;
`;

const LimitField = styled.label`
  display: flex;
  align-items: center;
  justify-content: space-between;
  height: 31px;
`;

const LimitInput = styled.input`
  width: 31px;
  height: 31px;
  padding: 0 2px 4px 3px;
  border: 1px solid #a9bcd6;
  background: #edf5fd;
  font-size: 13px;
  color: #111;
`;

const ScaleBox = styled.div`
  position: relative;
  width: 100px;
  height: 31px;
  margin-top: 4px;
`;

const ScaleSelect = styled.select`
  appearance: none;
  width: 100%;
  height: 100%;
  padding-left: 2px;
  border: 1px solid #a9bcd6;
  border-radius: 0;
  background: #edf5fd;
  color: #111;
`;

const ScaleArrow = styled.svg`
  position: absolute;
  top: 13px;
  right: 6px;
  width: 6px;
  height: 4px;
  pointer-events: none;
`;

const Workspace = styled.main`
  display: flex;
  flex: 1;
  gap: 4px;
  min-height: 0;
`;

const Panel = styled.section`
  display: flex;
  flex-direction: column;
  flex: none;
  width: ${({ $width }) => $width}px;
`;

const PanelHeader = styled.h2`
  display: flex;
  align-items: center;
  justify-content: space-between;
  flex: none;
  height: 28px;
  margin: 0;
  padding: 0 6px;
  background: linear-gradient(#dfebfa, #c5d5ea 45%, #b0c2db);
  font-size: 14px;
  font-weight: 400;
`;

const CloseButton = styled.button`
  display: flex;
`;

const PanelBody = styled.div`
  display: flex;
  flex: 1;
  align-items: ${({ $white }) => ($white ? "flex-start" : "stretch")};
  min-height: 0;
  background: ${({ $white }) => ($white ? "#fff" : "#dce8f6")};
`;

const ObjectCard = styled.button`
  display: flex;
  flex-direction: column;
  align-items: center;
  gap: 31px;
  width: 71px;
  height: 97px;
  padding: 11px 3px 0 4px;
  border: 1px solid #9dadc8;
  background: linear-gradient(#dfeaf7, #d8e4f2);
`;

const TrackGrid = styled.div`
  display: grid;
  flex: 1;
  grid-template-columns: repeat(3, 59px);
  grid-auto-rows: 93px;
  padding-left: 2px;
  overflow: hidden;
  border: 1px solid #9dadc8;
  border-bottom: 0;
`;

const TrackCell = styled.div`
  display: flex;
  flex-direction: column;
  align-items: center;
  gap: 20px;
`;

const CanvasArea = styled.section`
  display: grid;
  flex: 1;
  grid-template: 1fr 21px / 1fr 21px;
  min-width: 0;
  border-top: 1px solid #b4bac2;
`;

const Plan = styled.svg`
  width: 100%;
  height: 100%;
  min-height: 0;
  border-left: 1px solid #a9b8cc;
  background: #fff;
`;

const ScrollBar = styled.div`
  display: flex;
  flex: none;
  flex-direction: ${({ $vertical }) => ($vertical ? "column" : "row")};
  min-height: 0;
  background: #efefef;
`;

const ArrowButton = styled.button`
  display: flex;
  flex: none;
  align-items: center;
  justify-content: center;
  width: 21px;
  height: 21px;
`;

const Track = styled.div`
  display: flex;
  flex: 1;
  flex-direction: ${({ $vertical }) => ($vertical ? "column" : "row")};
  min-height: 0;
  padding: ${({ $vertical }) => ($vertical ? "0 1px" : "1px")};
`;

const Thumb = styled.div`
  display: flex;
  align-items: center;
  justify-content: center;
  flex: 0 0 ${({ $size }) => $size};
  border: 1px solid #8f8f8f;
  border-radius: 2px;
  background: linear-gradient(
    ${({ $vertical }) => ($vertical ? "90deg" : "180deg")},
    #f6f6f6,
    #e6e6e8 45%,
    #d2d3d6 55%,
    #dcdcde
  );
`;

const Grip = styled.span`
  width: ${({ $vertical }) => ($vertical ? 9 : 10)}px;
  height: ${({ $vertical }) => ($vertical ? 10 : 9)}px;
  background: repeating-linear-gradient(
    ${({ $vertical }) => ($vertical ? "180deg" : "90deg")},
    #4d4d4d 0 1px,
    #fff 1px 2px,
    transparent 2px 4px
  );
`;

const Corner = styled.div`
  background: #ececec;
`;

const StatusBar = styled.footer`
  display: flex;
  align-items: center;
  flex: none;
  height: 26px;
  border-top: 1px solid ${line};
  background: linear-gradient(#e0e9f5, #cbd8ea 45%, #b3c5dd 55%, #b6c8de);
  font-size: 14px;
  line-height: 20px;
`;

const StatusCell = styled.div`
  height: 20px;
  width: ${({ $width }) => $width}px;
  border-right: 2px solid #e3eefb;
  text-align: center;
`;

const StatusMessage = styled.div`
  flex: 1;
  padding-left: 7px;
`;

const ZoomButton = styled.button`
  display: flex;
`;

const ZoomSlider = styled.input`
  appearance: none;
  width: 96px;
  height: 18px;
  background: linear-gradient(#7288a8, #7288a8) center / 100% 1px no-repeat;

  &::-webkit-slider-thumb {
    appearance: none;
    width: 9px;
    height: 13px;
    background: #f5f8fc;
    border: 1px solid #5f7596;
    border-radius: 1px 1px 5px 5px;
  }
`;

const SizeGrip = styled.svg`
  width: 12px;
  height: 12px;
  margin: 6px 0 0 10px;
`;

const Taskbar = styled.footer`
  display: flex;
  flex: none;
  height: 47px;
  padding-bottom: 1px;
  border-top: 1px solid #16283c;
  background: linear-gradient(rgba(150, 190, 220, 0.5) 0, rgba(6, 26, 50, 0.65) 15%, rgba(6, 26, 50, 0.4) 32%, rgba(6, 26, 50, 0) 48%),
    linear-gradient(90deg, #1a5f99, #2a8cca 9%, #3393cc 30%, #2a8ad0 45%, #1b69b6 62%, #1c62ab 80%, #15447c 86%, #14396a);
`;

const StartButton = styled.button`
  display: flex;
  align-items: center;
  justify-content: center;
  width: 66px;
`;

const TaskList = styled.div`
  display: flex;
  gap: 4px;
  padding-left: 6px;
`;

const TaskButton = styled.button`
  display: flex;
  align-items: center;
  justify-content: center;
  width: 66px;

  ${({ $open }) =>
    $open &&
    css`
      border: 1px solid #cfe3f0;
      border-radius: 3px;
      background: linear-gradient(135deg, rgba(255, 255, 255, 0.6), rgba(255, 255, 255, 0.2) 50%, rgba(255, 255, 255, 0.12));
      box-shadow: 0 0 0 1px #1c3c58;
    `}

  ${({ $active }) =>
    $active &&
    css`
      background: linear-gradient(135deg, rgba(255, 255, 255, 0.85), rgba(215, 237, 250, 0.6));
    `}
`;

const LightStreak = styled.svg`
  width: 120px;
  height: 46px;
  margin-left: auto;
`;

const Tray = styled.div`
  display: flex;
  align-items: center;
  gap: 10px;
  padding-left: 84px;
  color: #fff;
`;

const Language = styled.span`
  padding: 0 12px 4px 0;
`;

const Clock = styled.time`
  display: flex;
  flex-direction: column;
  align-items: center;
  gap: 5px;
  padding: 0 5px 0 12px;
  font-size: 14px;
`;

const ShowDesktop = styled.button`
  align-self: stretch;
  width: 14px;
  border: 1px solid #6e8aa8;
  background: linear-gradient(rgba(170, 195, 220, 0.55), rgba(20, 50, 90, 0.6) 45%, rgba(50, 90, 140, 0.5));
`;

export default App;
